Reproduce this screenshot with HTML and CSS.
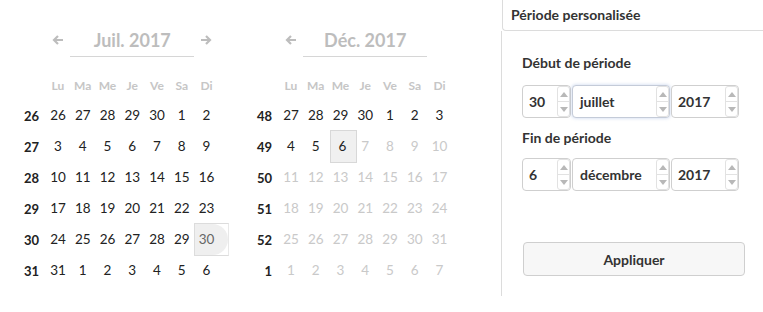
FILE: index.html
```html
<!DOCTYPE html>
<html lang="fr">
<head>
<meta charset="utf-8">
<title>Période</title>
<link rel="stylesheet" href="styles.css">
</head>
<body>
<div class="page">
  <div class="calendars">
    <div class="cal">
      <div class="cal-head">
        <div></div>
        <div class="nav"><svg width="12" height="10" viewBox="0 0 12 10"><path d="M11 5H2M6 1L2 5l4 4" fill="none" stroke="#bdbdbd" stroke-width="2.2"/></svg></div>
        <div class="title">Juil. 2017</div>
        <div class="nav"><svg width="12" height="10" viewBox="0 0 12 10"><path d="M1 5h9M6 1l4 4-4 4" fill="none" stroke="#bdbdbd" stroke-width="2.2"/></svg></div>
      </div>
      <div class="grid">
        <div></div><div class="dow">Lu</div><div class="dow">Ma</div><div class="dow">Me</div><div class="dow">Je</div><div class="dow">Ve</div><div class="dow">Sa</div><div class="dow">Di</div>
        <div class="wk">26</div><div class="d">26</div><div class="d">27</div><div class="d">28</div><div class="d">29</div><div class="d">30</div><div class="d">1</div><div class="d">2</div>
        <div class="wk">27</div><div class="d">3</div><div class="d">4</div><div class="d">5</div><div class="d">6</div><div class="d">7</div><div class="d">8</div><div class="d">9</div>
        <div class="wk">28</div><div class="d">10</div><div class="d">11</div><div class="d">12</div><div class="d">13</div><div class="d">14</div><div class="d">15</div><div class="d">16</div>
        <div class="wk">29</div><div class="d">17</div><div class="d">18</div><div class="d">19</div><div class="d">20</div><div class="d">21</div><div class="d">22</div><div class="d">23</div>
        <div class="wk">30</div><div class="d">24</div><div class="d">25</div><div class="d">26</div><div class="d">27</div><div class="d">28</div><div class="d">29</div><div class="d sel-start"><span>30</span></div>
        <div class="wk">31</div><div class="d">31</div><div class="d">1</div><div class="d">2</div><div class="d">3</div><div class="d">4</div><div class="d">5</div><div class="d">6</div>
      </div>
    </div>
    <div class="cal">
      <div class="cal-head">
        <div></div>
        <div class="nav"><svg width="12" height="10" viewBox="0 0 12 10"><path d="M11 5H2M6 1L2 5l4 4" fill="none" stroke="#bdbdbd" stroke-width="2.2"/></svg></div>
        <div class="title">Déc. 2017</div>
        <div class="nav"></div>
      </div>
      <div class="grid">
        <div></div><div class="dow">Lu</div><div class="dow">Ma</div><div class="dow">Me</div><div class="dow">Je</div><div class="dow">Ve</div><div class="dow">Sa</div><div class="dow">Di</div>
        <div class="wk">48</div><div class="d">27</div><div class="d">28</div><div class="d">29</div><div class="d">30</div><div class="d">1</div><div class="d">2</div><div class="d">3</div>
        <div class="wk">49</div><div class="d">4</div><div class="d">5</div><div class="d sel-end"><span>6</span></div><div class="d off">7</div><div class="d off">8</div><div class="d off">9</div><div class="d off">10</div>
        <div class="wk">50</div><div class="d off">11</div><div class="d off">12</div><div class="d off">13</div><div class="d off">14</div><div class="d off">15</div><div class="d off">16</div><div class="d off">17</div>
        <div class="wk">51</div><div class="d off">18</div><div class="d off">19</div><div class="d off">20</div><div class="d off">21</div><div class="d off">22</div><div class="d off">23</div><div class="d off">24</div>
        <div class="wk">52</div><div class="d off">25</div><div class="d off">26</div><div class="d off">27</div><div class="d off">28</div><div class="d off">29</div><div class="d off">30</div><div class="d off">31</div>
        <div class="wk">1</div><div class="d off">1</div><div class="d off">2</div><div class="d off">3</div><div class="d off">4</div><div class="d off">5</div><div class="d off">6</div><div class="d off">7</div>
      </div>
    </div>
  </div>

  <div class="panel">
    <div class="panel-head">Période personalisée</div>
    <div class="panel-body">
      <div class="label">Début de période</div>
      <div class="fields">
        <div class="field f-day"><span>30</span><div class="spin"><div class="up"></div><div class="down"></div></div></div>
        <div class="field f-month focus"><span>juillet</span><div class="spin"><div class="up"></div><div class="down"></div></div></div>
        <div class="field f-year"><span>2017</span><div class="spin"><div class="up"></div><div class="down"></div></div></div>
      </div>
      <div class="label second">Fin de période</div>
      <div class="fields">
        <div class="field f-day"><span>6</span><div class="spin"><div class="up"></div><div class="down"></div></div></div>
        <div class="field f-month"><span>décembre</span><div class="spin"><div class="up"></div><div class="down"></div></div></div>
        <div class="field f-year"><span>2017</span><div class="spin"><div class="up"></div><div class="down"></div></div></div>
      </div>
      <button class="apply" type="button">Appliquer</button>
    </div>
  </div>
</div>
</body>
</html>
```

FILE: styles.css
```css
html, body {
  margin: 0;
  padding: 0;
  background: #fff;
}
body {
  font-family: Lato, "Open Sans", sans-serif;
  width: 763px;
  height: 312px;
  overflow: hidden;
}
.page {
  display: flex;
  height: 312px;
}
.calendars {
  width: 501px;
  flex: none;
  box-sizing: border-box;
  display: flex;
  gap: 33.75px;
  padding: 24px 0 0 19.6px;
}
.cal {
  width: 199.25px;
}
.cal-head {
  display: grid;
  grid-template-columns: 26px 24.75px 123.75px 24.75px;
  height: 33px;
  margin-bottom: 15px;
}
.nav {
  display: flex;
  align-items: center;
  justify-content: center;
  height: 32px;
}
.title {
  height: 32px;
  border-bottom: 1px solid #d6d6d6;
  display: flex;
  align-items: center;
  justify-content: center;
  font-size: 18px;
  font-weight: 700;
  color: #bdbdbd;
}
.grid {
  display: grid;
  grid-template-columns: 26px repeat(7, 24.75px);
  grid-template-rows: 27px repeat(6, 31px);
}
.dow {
  display: flex;
  align-items: center;
  justify-content: center;
  font-size: 12px;
  font-weight: 700;
  color: #c6c6c6;
}
.wk {
  display: flex;
  align-items: center;
  justify-content: flex-end;
  padding-right: 6.5px;
  padding-top: 2px;
  font-size: 13px;
  font-weight: 700;
  color: #222;
}
.d {
  display: flex;
  align-items: center;
  justify-content: center;
  font-size: 13.5px;
  color: #222;
  position: relative;
}
.d.off {
  color: #c9c9c9;
}
.d span {
  position: relative;
  z-index: 1;
}
.sel-start span {
  color: #666;
}
.sel-start::before {
  content: "";
  position: absolute;
  top: 0;
  left: 0;
  width: 35px;
  height: 33px;
  box-sizing: border-box;
  border: 1px solid #dcdcdc;
  border-right-color: #e8e8e8;
  background: #fff;
}
.sel-start::after {
  content: "";
  position: absolute;
  top: 1px;
  left: 1px;
  width: 33px;
  height: 31px;
  background: #efefef;
  border-radius: 0 16px 16px 0;
}
.sel-end::before {
  content: "";
  position: absolute;
  top: 0;
  left: 2px;
  width: 27px;
  height: 33px;
  box-sizing: border-box;
  border: 1px solid #d8d8d8;
  background: #f0f0f0;
}
.sel-end span {
  left: 2px;
}

.panel {
  flex: 1;
  display: flex;
  flex-direction: column;
  color: #333;
}
.panel-head {
  margin-left: 1px;
  height: 29px;
  border-left: 1px solid #dcdcdc;
  border-bottom: 1px solid #dcdcdc;
  border-bottom-left-radius: 4px;
  padding-left: 8px;
  display: flex;
  align-items: center;
  font-size: 14px;
  font-weight: 700;
  padding-bottom: 1px;
}
.panel-body {
  border-left: 1px solid #dcdcdc;
  height: 265px;
  box-sizing: border-box;
  padding: 22px 0 0 20px;
  display: flex;
  flex-direction: column;
  align-items: flex-start;
}
.label {
  font-size: 14px;
  font-weight: 700;
  line-height: 20px;
  height: 20px;
}
.label.second {
  margin-top: 10px;
}
.fields {
  display: flex;
  gap: 1px;
  margin-top: 12px;
}
.label.second + .fields {
  margin-top: 10px;
}
.field {
  height: 33px;
  box-sizing: border-box;
  border: 1px solid #cfcfcf;
  border-radius: 4px;
  display: flex;
  align-items: stretch;
  justify-content: space-between;
  padding-left: 6px;
  font-size: 14px;
  font-weight: 700;
  background: #fff;
}
.field span {
  align-self: center;
}
.f-day { width: 49px; }
.f-month { width: 98px; padding-left: 7px; }
.f-year { width: 68px; }
.field.focus {
  border-color: #c4cbd8;
  box-shadow: 0 0 3px 1px rgba(120, 150, 210, 0.25);
}
.spin {
  width: 13px;
  box-sizing: border-box;
  border: 1px solid #e2e2e2;
  border-radius: 3px;
  display: flex;
  flex-direction: column;
  background: #fff;
}
.spin .up, .spin .down {
  flex: 1;
  display: flex;
  align-items: center;
  justify-content: center;
}
.spin .up {
  border-bottom: 1px solid #e2e2e2;
}
.spin .up::before {
  content: "";
  border-left: 4px solid transparent;
  border-right: 4px solid transparent;
  border-bottom: 5px solid #b8b8b8;
}
.spin .down::before {
  content: "";
  border-left: 4px solid transparent;
  border-right: 4px solid transparent;
  border-top: 5px solid #b8b8b8;
}
.apply {
  margin-top: 51px;
  margin-left: 1px;
  width: 222px;
  height: 34px;
  border: 1px solid #cfcfcf;
  border-radius: 4px;
  background: #f7f7f7;
  font-family: Lato, "Open Sans", sans-serif;
  font-size: 14px;
  font-weight: 700;
  color: #333;
  padding: 0;
}
```
